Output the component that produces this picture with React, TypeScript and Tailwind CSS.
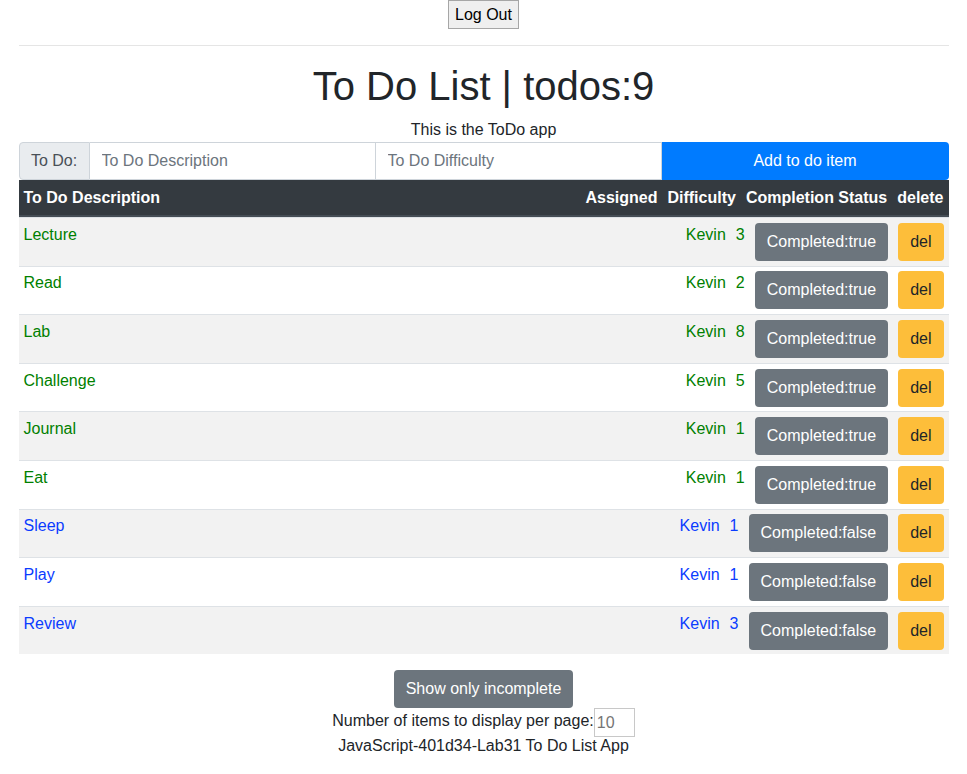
import React from "react";

type Todo = { text: string; assignee: string; difficulty: number; complete: boolean };

const todos: Todo[] = [
  { text: "Lecture", assignee: "Kevin", difficulty: 3, complete: true },
  { text: "Read", assignee: "Kevin", difficulty: 2, complete: true },
  { text: "Lab", assignee: "Kevin", difficulty: 8, complete: true },
  { text: "Challenge", assignee: "Kevin", difficulty: 5, complete: true },
  { text: "Journal", assignee: "Kevin", difficulty: 1, complete: true },
  { text: "Eat", assignee: "Kevin", difficulty: 1, complete: true },
  { text: "Sleep", assignee: "Kevin", difficulty: 1, complete: false },
  { text: "Play", assignee: "Kevin", difficulty: 1, complete: false },
  { text: "Review", assignee: "Kevin", difficulty: 3, complete: false },
];

function TodoRow({ t, i }: { t: Todo; i: number }) {
  const color = t.complete ? "text-[#008000]" : "text-[#0a3cff]";
  return (
    <div
      className={`flex border-t border-[#dee2e6] py-[4.8px] ${i % 2 === 0 ? "bg-[#f2f2f2]" : "bg-white"}`}
    >
      <div className={`flex-1 px-[5px] leading-6 ${color}`}>{t.text}</div>
      <div className={`px-[5px] leading-6 ${color}`}>{t.assignee}</div>
      <div className={`px-[5px] leading-6 ${color}`}>{t.difficulty}</div>
      <div className="px-[5px]">
        <button className="h-[38px] rounded-[4px] bg-[#6c757d] px-3 text-white">
          Completed:{t.complete ? "true" : "false"}
        </button>
      </div>
      <div className="px-[5px]">
        <button className="h-[38px] rounded-[4px] bg-[#fdbe3a] px-3 text-[#212529]">del</button>
      </div>
    </div>
  );
}

export default function App() {
  return (
    <div className="min-h-[774px] bg-white text-base text-[#212529] [font-family:'Liberation_Sans',Arial,sans-serif]">
      <div className="flex justify-center">
        <button className="h-[29px] border border-[#a6a6a6] bg-[#efefef] px-[6px] text-base text-black">
          Log Out
        </button>
      </div>
      <div className="mx-auto w-[930px]">
        <hr className="mt-4 mb-4 border-t border-[#e5e5e5]" />
        <h1 className="mb-2 text-center text-[40px] leading-[48px] font-medium">To Do List | todos:9</h1>
        <p className="text-center leading-6">This is the ToDo app</p>

        <form className="flex h-[38px]">
          <span className="flex w-[71px] items-center justify-center rounded-l-[4px] border border-[#ced4da] bg-[#e9ecef] text-[#495057]">
            To Do:
          </span>
          <input
            className="w-[286px] border border-l-0 border-[#ced4da] px-3 text-[#495057] outline-none placeholder:text-[#6c757d]"
            placeholder="To Do Description"
          />
          <input
            className="w-[286px] border border-l-0 border-[#ced4da] px-3 text-[#495057] outline-none placeholder:text-[#6c757d]"
            placeholder="To Do Difficulty"
          />
          <button type="button" className="flex-1 rounded-r-[4px] bg-[#007bff] text-white">
            Add to do item
          </button>
        </form>

        <div className="mb-4">
          <div className="flex h-[37px] items-center border-b-2 border-[#454d55] bg-[#343a40] font-bold text-white">
            <div className="flex-1 px-[5px]">To Do Description</div>
            <div className="px-[5px]">Assigned</div>
            <div className="px-[5px]">Difficulty</div>
            <div className="px-[5px]">Completion Status</div>
            <div className="px-[5px]">delete</div>
          </div>
          {todos.map((t, i) => (
            <TodoRow key={i} t={t} i={i} />
          ))}
        </div>

        <div className="flex justify-center">
          <button className="h-[38px] rounded-[4px] bg-[#6c757d] px-3 text-white">Show only incomplete</button>
        </div>
        <div className="flex h-[26px] items-start justify-center">
          <span className="leading-[26px]">Number of items to display per page:</span>
          <input
            className="h-[29px] w-[41px] border border-[#c8c8c8] px-[2px] text-[#757575] outline-none"
            defaultValue="10"
          />
        </div>
        <p className="text-center leading-6">JavaScript-401d34-Lab31 To Do List App</p>
      </div>
    </div>
  );
}
